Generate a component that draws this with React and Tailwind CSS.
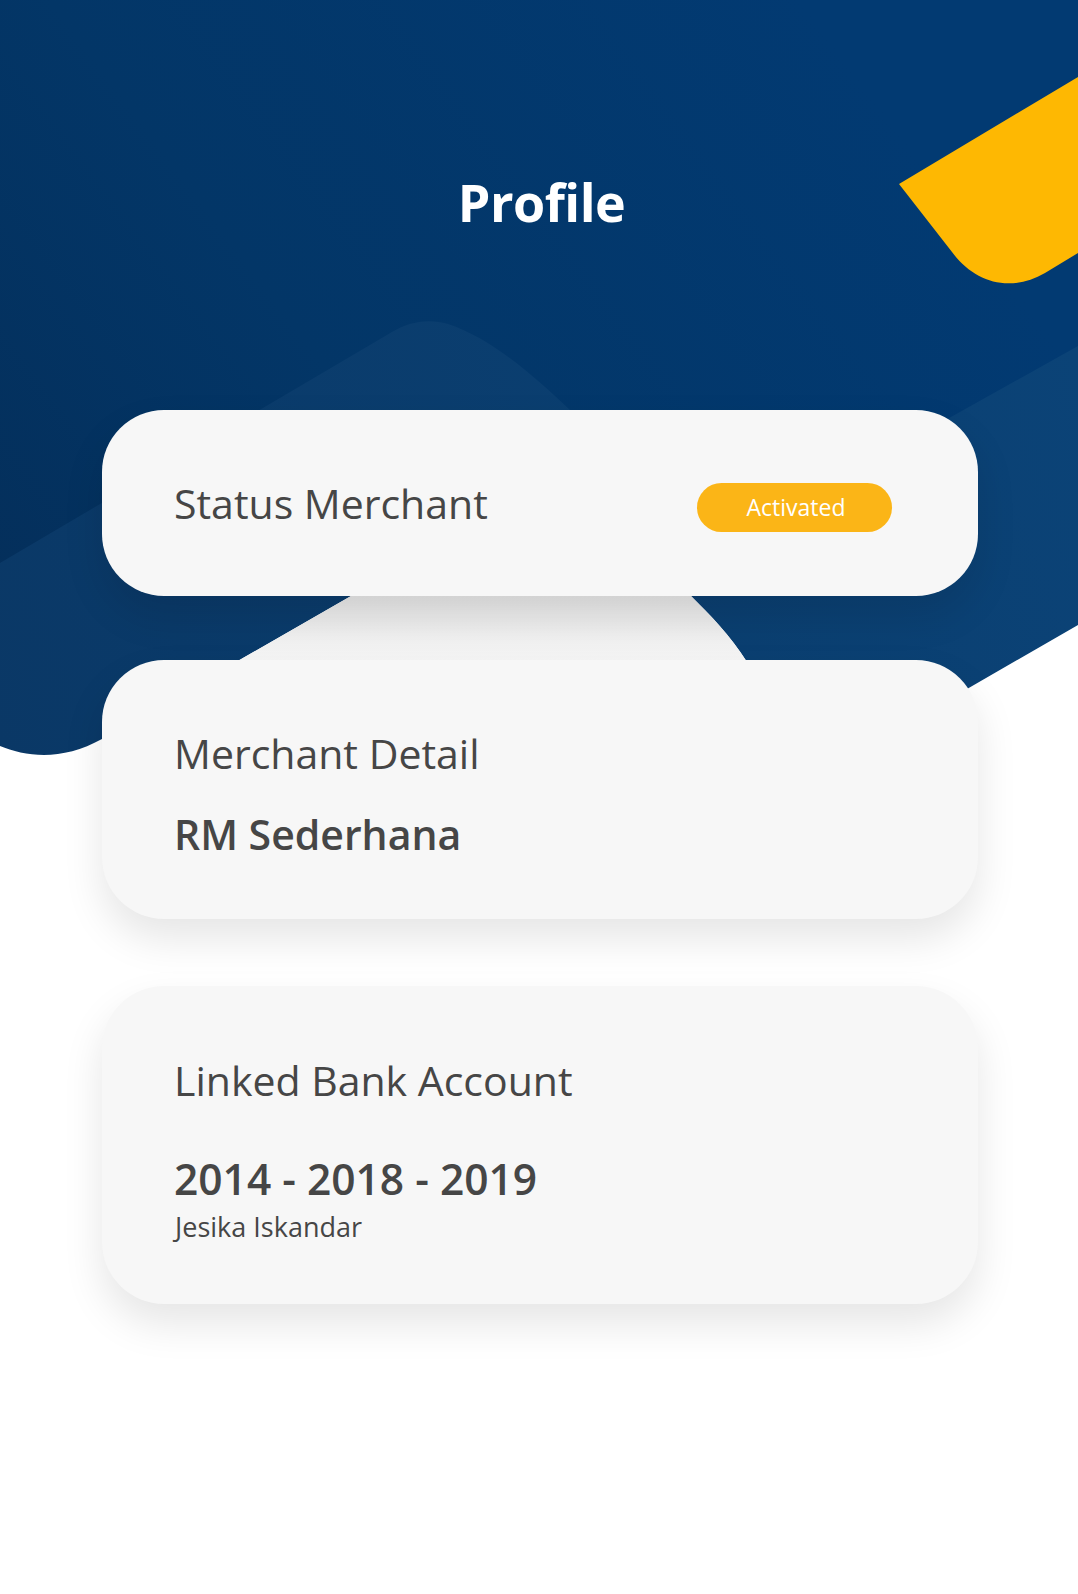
export default function App() {
  return (
    <div className="relative w-full h-[1594px] overflow-hidden bg-white font-['Open_Sans','Noto_Sans',sans-serif]">
      <svg
        className="absolute left-0 top-0"
        width="1078"
        height="800"
        viewBox="0 0 1078 800"
      >
        <defs>
          <linearGradient id="darkG" x1="800" y1="0" x2="0" y2="600" gradientUnits="userSpaceOnUse">
            <stop offset="0" stopColor="#023a72" />
            <stop offset="0.6" stopColor="#033667" />
            <stop offset="1" stopColor="#042f5b" />
          </linearGradient>
          <linearGradient id="lightG" x1="1078" y1="350" x2="0" y2="750" gradientUnits="userSpaceOnUse">
            <stop offset="0" stopColor="#0b4377" />
            <stop offset="1" stopColor="#0a3866" />
          </linearGradient>
          <linearGradient id="gapG" x1="0" y1="596" x2="0" y2="662" gradientUnits="userSpaceOnUse">
            <stop offset="0" stopColor="#e6e6e6" />
            <stop offset="1" stopColor="#f6f6f6" />
          </linearGradient>
        </defs>
        <rect x="0" y="0" width="1078" height="800" fill="url(#darkG)" />
        <path
          d="M0,563 L392,332 C408,322 428,318 448,324 C490,338 530,372 570,410 L640,500 L700,558 L951,417 L1078,346 V800 H0 Z"
          fill="url(#lightG)"
        />
        <path
          d="M0,746 C12,751 28,755 44,755 C62,755 82,750 102,739 L351,596 L600,452 L691,596 C710,615 730,635 747,662 L790,700 L967,689 L1078,625 V800 H0 Z"
          fill="#ffffff"
        />
        <path
          d="M236,662 L351,596 L691,596 C710,615 730,635 747,662 Z"
          fill="url(#gapG)"
        />
        <path
          d="M899,184 L1078,77 L1078,253 L1045,273 C1010,293 975,283 952,252 Z"
          fill="#feb802"
        />
      </svg>

      <div className="relative flex flex-col">
        <h1 className="mt-[176px] pl-[5px] text-center text-[52px] leading-none font-bold tracking-[-0.01em] text-white">
          Profile
        </h1>

        <div className="mt-[182px] ml-[102px] w-[876px] h-[186px] rounded-[62px] bg-[#f7f7f7] shadow-[0_20px_40px_rgba(0,0,0,0.1)] flex items-center justify-between pl-[72px] pr-[86px]">
          <span className="text-[41px] leading-none text-[#464646]">Status Merchant</span>
          <div className="mt-[9px] w-[195px] h-[49px] rounded-full bg-[#fbb517] flex items-center justify-center pl-[3px] text-[23px] leading-none text-white">
            Activated
          </div>
        </div>

        <div className="mt-[64px] ml-[102px] w-[876px] h-[259px] rounded-[62px] bg-[#f7f7f7] shadow-[0_20px_40px_rgba(0,0,0,0.1)] flex flex-col pt-[73px] pl-[72px]">
          <p className="text-[41px] leading-none text-[#464646]">Merchant Detail</p>
          <p className="mt-[40px] text-[41px] leading-none font-semibold text-[#464646]">RM Sederhana</p>
        </div>

        <div className="mt-[67px] ml-[102px] w-[876px] h-[318px] rounded-[62px] bg-[#f7f7f7] shadow-[0_20px_40px_rgba(0,0,0,0.1)] flex flex-col pt-[74px] pl-[72px]">
          <p className="text-[41px] leading-none text-[#464646]">Linked Bank Account</p>
          <p className="mt-[57px] text-[42.5px] leading-none font-semibold text-[#464646]">2014 - 2018 - 2019</p>
          <p className="mt-[12px] pl-[1px] text-[27px] leading-none text-[#464646]">Jesika Iskandar</p>
        </div>
      </div>
    </div>
  );
}
